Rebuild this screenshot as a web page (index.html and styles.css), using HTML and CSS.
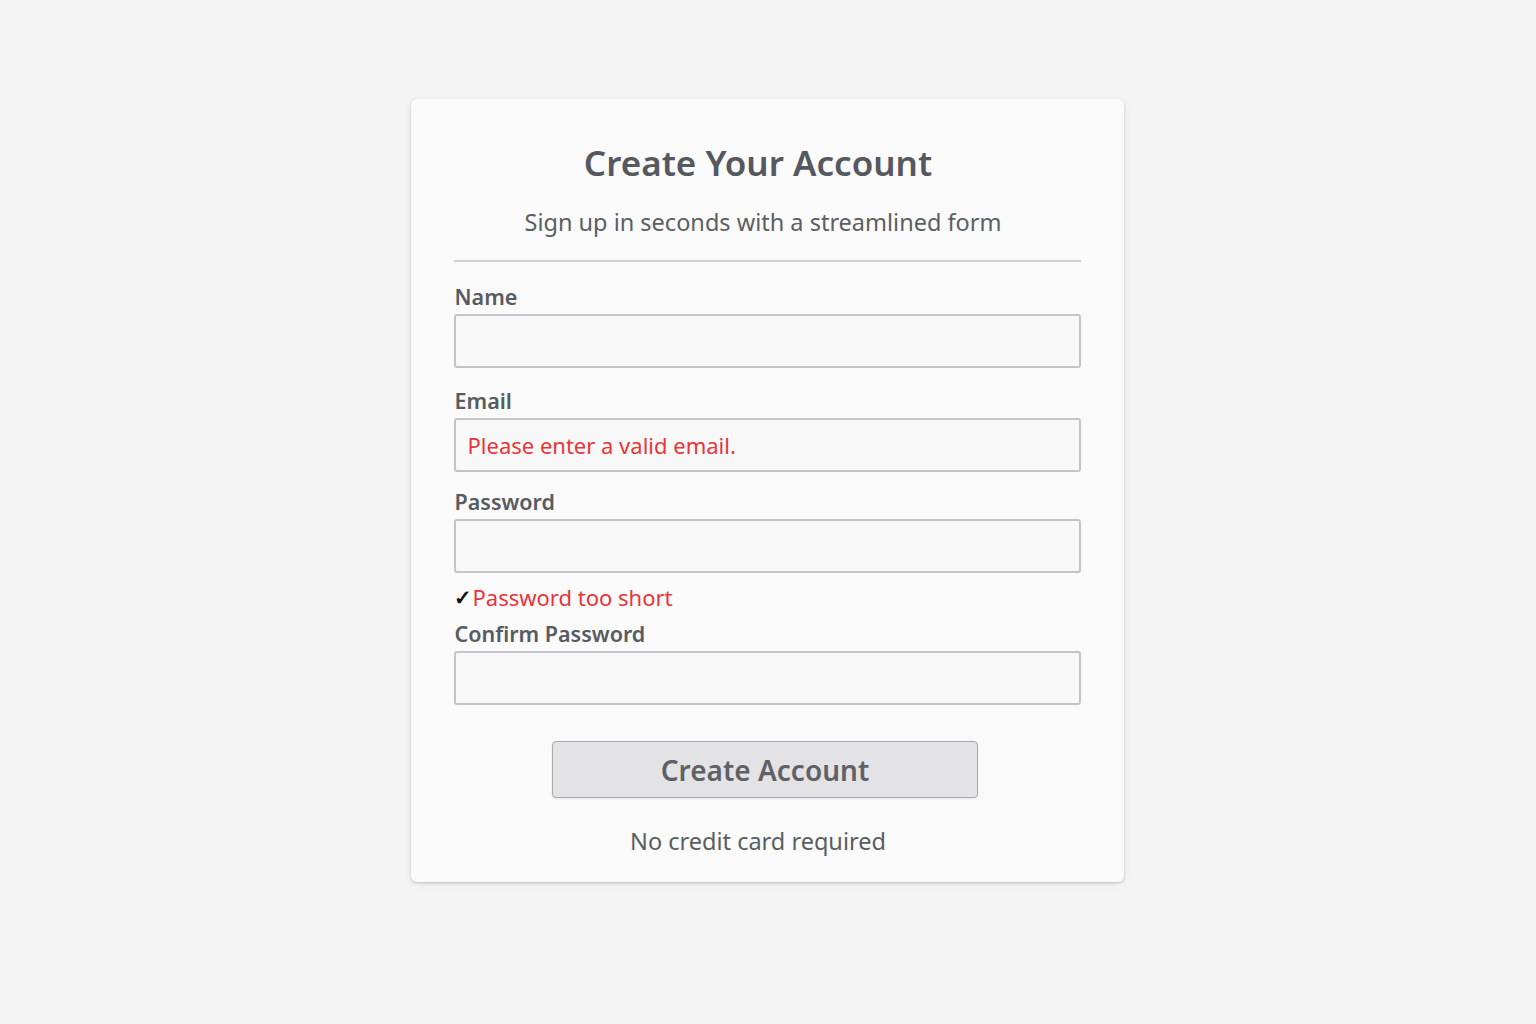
FILE: index.html
```html
<!DOCTYPE html>
<html lang="en">
<head>
<meta charset="utf-8">
<title>Create Your Account</title>
<link rel="stylesheet" href="styles.css">
</head>
<body>
<main class="page">
  <section class="card">
    <h1 class="title">Create Your Account</h1>
    <p class="subtitle">Sign up in seconds with a streamlined form</p>
    <hr class="divider">
    <form class="form">
      <div class="field">
        <label class="label">Name</label>
        <div class="input"></div>
      </div>
      <div class="field">
        <label class="label">Email</label>
        <div class="input input-error"><span class="error-text">Please enter a valid email.</span></div>
      </div>
      <div class="field">
        <label class="label">Password</label>
        <div class="input"></div>
        <div class="hint"><span class="check">✓</span><span class="error-text">Password too short</span></div>
      </div>
      <div class="field">
        <label class="label">Confirm Password</label>
        <div class="input"></div>
      </div>
      <div class="actions">
        <button type="button" class="btn">Create Account</button>
      </div>
      <p class="note">No credit card required</p>
    </form>
  </section>
</main>
</body>
</html>
```
FILE: styles.css
```css
* { box-sizing: border-box; }
html, body { margin: 0; padding: 0; }
body {
  background: #f4f4f5;
  font-family: "Noto Sans", "Open Sans", "Liberation Sans", sans-serif;
  color: #55585e;
  width: 1536px;
  height: 1024px;
}
.page {
  display: flex;
  justify-content: center;
  padding-top: 99px;
}
.card {
  width: 713px;
  height: 783px;
  background: #fafafa;
  border-radius: 6px;
  box-shadow: 0 1px 3px rgba(0,0,0,0.18), 0 2px 8px rgba(0,0,0,0.06);
  padding: 40px 43px 0 43px;
  margin-left: -2px;
}
.title {
  margin: 0;
  text-align: center;
  font-size: 35px;
  font-weight: 600;
  line-height: 48px;
  color: #55585e;
  padding-right: 18px;
}
.subtitle {
  margin: 20px 0 0;
  text-align: center;
  font-size: 23.5px;
  line-height: 30px;
  color: #5b5e63;
  padding-right: 8px;
}
.divider {
  margin: 23px 0 0;
  border: 0;
  height: 2px;
  background: #d2d2d4;
}
.form {
  display: flex;
  flex-direction: column;
  margin-top: 21px;
}
.field { display: flex; flex-direction: column; }
.field:nth-child(2) { margin-top: 19px; }
.field:nth-child(3) { margin-top: 16px; }
.field:nth-child(4) { margin-top: 7px; }
.label {
  font-size: 21.5px;
  font-weight: 600;
  line-height: 28px;
  color: #585b61;
  padding-left: 1px;
}
.input {
  margin-top: 3px;
  height: 54px;
  border: 2px solid #c4c4c7;
  border-radius: 3px;
  background: #f8f8f8;
  display: flex;
  align-items: center;
  padding-left: 12px;
}
.error-text {
  color: #e8343a;
  font-size: 22px;
}
.hint {
  display: flex;
  align-items: center;
  margin-top: 8px;
  line-height: 32px;
}
.check {
  color: #111;
  font-size: 21px;
  font-weight: 700;
  width: 19px;
}
.actions {
  display: flex;
  justify-content: center;
  margin-top: 36px;
}
.btn {
  width: 426px;
  height: 57px;
  margin-left: -4px;
  background: #e3e3e5;
  border: 1.5px solid #a9a9ad;
  border-radius: 4px;
  font-family: inherit;
  font-size: 28px;
  font-weight: 600;
  color: #5f6166;
  box-shadow: 0 1px 2px rgba(0,0,0,0.08);
}
.note {
  margin: 27px 0 0;
  text-align: center;
  font-size: 23.5px;
  color: #5a5d62;
  padding-right: 18px;
}
```
